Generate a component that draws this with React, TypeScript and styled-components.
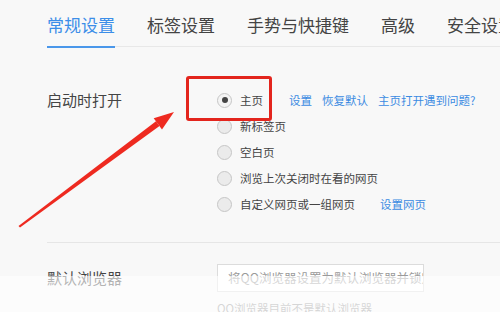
import React from "react";
import styled, { createGlobalStyle } from "styled-components";

const Global = createGlobalStyle`
  html, body { margin: 0; padding: 0; background: #f8f8f8; }
  body { font-family: "Noto Sans CJK SC", "Noto Sans", sans-serif; color: #333; }
`;

const Page = styled.div`
  position: relative;
  width: 500px;
  height: 312px;
  overflow: hidden;
  background: #f8f8f8;
`;

const TabBar = styled.div`
  display: flex;
  gap: 32px;
  margin-left: 47px;
  border-bottom: 1px solid #e8e8e8;
  height: 46px;
  white-space: nowrap;
`;

const Tab = styled.div<{ $active?: boolean }>`
  flex: none;
  font-size: 17px;
  line-height: 24px;
  padding-top: 13px;
  height: 33px;
  color: ${(p) => (p.$active ? "#3c8ee8" : "#444")};
  border-bottom: 2px solid ${(p) => (p.$active ? "#4a97ea" : "transparent")};
`;

const Section = styled.div<{ $top: number; $bottom: number }>`
  display: grid;
  grid-template-columns: 170px 1fr;
  padding: ${(p) => p.$top}px 0 ${(p) => p.$bottom}px 47px;
`;

const Label = styled.div<{ $lh: number }>`
  font-size: 15px;
  line-height: ${(p) => p.$lh}px;
  color: #444;
`;

const OptionList = styled.div`
  display: flex;
  flex-direction: column;
`;

const OptionRow = styled.div`
  display: flex;
  align-items: center;
  height: 26px;
  font-size: 11.5px;
  color: #444;
`;

const Radio = styled.span<{ $checked?: boolean }>`
  flex: none;
  box-sizing: border-box;
  width: 15px;
  height: 15px;
  border-radius: 50%;
  border: 1px solid #c6c6c6;
  background: ${(p) => (p.$checked ? "#f4f4f4" : "#ebebeb")};
  margin-right: 8px;
  display: flex;
  align-items: center;
  justify-content: center;
  &::after {
    content: "";
    display: ${(p) => (p.$checked ? "block" : "none")};
    width: 6px;
    height: 6px;
    border-radius: 50%;
    background: #444;
  }
`;

const Links = styled.div<{ $ml: number }>`
  display: flex;
  gap: 10px;
  margin-left: ${(p) => p.$ml}px;
`;

const Link = styled.span`
  color: #3b8be2;
`;

const Separator = styled.div`
  margin-left: 47px;
  border-top: 1px solid #e6e6e6;
`;

const Field = styled.div`
  box-sizing: border-box;
  width: 207px;
  height: 28px;
  border: 1px solid #dcdcdc;
  background: #fff;
  padding-left: 10px;
  font-size: 12.5px;
  line-height: 26px;
  color: #9a9a9a;
  white-space: nowrap;
  overflow: hidden;
`;

const Hint = styled.div`
  margin-top: 8px;
  font-size: 11.5px;
  line-height: 16px;
  color: #999;
`;

const Wash = styled.div`
  position: absolute;
  left: 0;
  right: 0;
  top: 276px;
  bottom: 0;
  background: rgba(255, 255, 255, 0.6);
`;

const Highlight = styled.div`
  position: absolute;
  left: 186px;
  top: 76px;
  width: 86px;
  height: 45px;
  box-sizing: border-box;
  border: 3px solid #e3251d;
  border-radius: 3px;
`;

const ArrowSvg = styled.svg`
  position: absolute;
  left: 0;
  top: 0;
  width: 500px;
  height: 312px;
  pointer-events: none;
`;

const options = ["主页", "新标签页", "空白页", "浏览上次关闭时在看的网页", "自定义网页或一组网页"];

export default function App() {
  return (
    <>
      <Global />
      <Page>
        <TabBar>
          <Tab $active>常规设置</Tab>
          <Tab>标签设置</Tab>
          <Tab>手势与快捷键</Tab>
          <Tab>高级</Tab>
          <Tab>安全设置</Tab>
        </TabBar>

        <Section $top={40} $bottom={25}>
          <Label $lh={26}>启动时打开</Label>
          <OptionList>
            {options.map((o, i) => (
              <OptionRow key={o}>
                <Radio $checked={i === 0} />
                {o}
                {i === 0 && (
                  <Links $ml={26}>
                    <Link>设置</Link>
                    <Link>恢复默认</Link>
                    <Link>主页打开遇到问题?</Link>
                  </Links>
                )}
                {i === 4 && (
                  <Links $ml={25}>
                    <Link>设置网页</Link>
                  </Links>
                )}
              </OptionRow>
            ))}
          </OptionList>
        </Section>

        <Separator />

        <Section $top={21} $bottom={0}>
          <Label $lh={28}>默认浏览器</Label>
          <div>
            <Field>将QQ浏览器设置为默认浏览器并锁定</Field>
            <Hint>QQ浏览器目前不是默认浏览器</Hint>
          </div>
        </Section>

        <Wash />
        <Highlight />
        <ArrowSvg viewBox="0 0 500 312">
          <polygon points="18.5,226 20,227.5 159.5,126 156,121.2" fill="#ee2a20" />
          <polygon points="174,112 162,129.5 153.7,118.3" fill="#ee2a20" />
        </ArrowSvg>
      </Page>
    </>
  );
}
